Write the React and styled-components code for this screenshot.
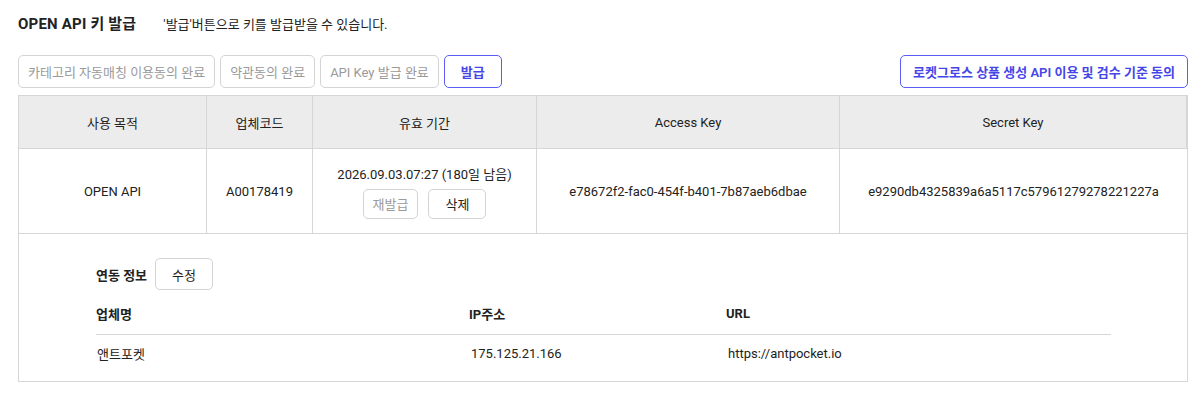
import * as React from 'react';
import styled, { createGlobalStyle } from 'styled-components';

const GlobalStyle = createGlobalStyle`
  body {
    margin: 0;
    background: #fff;
    font-family: "Roboto", "Noto Sans CJK KR", sans-serif;
    color: #222;
  }
`;

const Page = styled.div`
  padding: 12px 14px 0 18px;
`;

const TitleRow = styled.div`
  display: flex;
  align-items: baseline;
  gap: 27px;
  height: 22px;
`;

const Title = styled.h1`
  margin: 0;
  font-size: 15px;
  font-weight: 700;
  letter-spacing: 0.2px;
`;

const Desc = styled.span`
  font-size: 13px;
  color: #222;
`;

const Toolbar = styled.div`
  display: flex;
  align-items: center;
  gap: 5px;
  margin-top: 21px;
  height: 33px;
`;

const Button = styled.button`
  height: ${({ small }) => (small ? '30px' : '33px')};
  padding: 0 ${({ pad }) => pad || 9}px;
  border-radius: 5px;
  border: 1px solid ${({ primary }) => (primary ? '#5b5bf5' : '#d4d4d4')};
  background: #fff;
  color: ${({ primary, muted }) => (primary ? '#4646e8' : muted ? '#9a9a9a' : '#222')};
  font-family: inherit;
  font-size: 13px;
  font-weight: ${({ primary }) => (primary ? 600 : 400)};
  cursor: pointer;
  white-space: nowrap;
`;

const EditButton = styled(Button)`
  height: 32px;
`;

const Spacer = styled.div`
  flex: 1;
`;

const Box = styled.div`
  margin-top: 7px;
  width: 1168px;
  border: 1px solid #d6d6d6;
`;

const Grid = styled.div`
  display: grid;
  grid-template-columns: 188px 106px 224px 303px 1fr;
`;

const HeadCell = styled.div`
  height: 52px;
  display: flex;
  align-items: center;
  justify-content: center;
  background: #ececec;
  border-bottom: 1px solid #d6d6d6;
  border-right: 1px solid #d6d6d6;
  font-size: 13px;
  &:last-child { border-right: none; }
`;

const Cell = styled.div`
  height: 84px;
  display: flex;
  flex-direction: column;
  align-items: center;
  justify-content: center;
  gap: 6px;
  border-bottom: 1px solid #d6d6d6;
  border-right: ${({ last }) => (last ? 'none' : '1px solid #d6d6d6')};
  font-size: 13px;
`;

const ButtonPair = styled.div`
  display: flex;
  gap: 10px;
`;

const Detail = styled.div`
  padding: 24px 76px 10px 77px;
`;

const InfoRow = styled.div`
  display: flex;
  align-items: center;
  gap: 8px;
`;

const InfoLabel = styled.span`
  font-size: 13px;
  font-weight: 700;
`;

const SubTable = styled.div`
  margin-top: 2px;
  display: grid;
  grid-template-columns: 373px 257px 1fr;
`;

const SubHead = styled.div`
  height: 42px;
  display: flex;
  align-items: center;
  font-size: 13px;
  font-weight: 700;
  border-bottom: 1px solid #d6d6d6;
`;

const SubCell = styled.div`
  height: 36px;
  display: flex;
  align-items: center;
  font-size: 13px;
  padding-left: ${({ indent }) => indent || 0}px;
`;

const headers = ['사용 목적', '업체코드', '유효 기간', 'Access Key', 'Secret Key'];

export default function App() {
  return (
    <Page>
      <GlobalStyle />
      <TitleRow>
        <Title>OPEN API 키 발급</Title>
        <Desc>'발급'버튼으로 키를 발급받을 수 있습니다.</Desc>
      </TitleRow>
      <Toolbar>
        <Button muted>카테고리 자동매칭 이용동의 완료</Button>
        <Button muted>약관동의 완료</Button>
        <Button muted>API Key 발급 완료</Button>
        <Button primary pad={16}>발급</Button>
        <Spacer />
        <Button primary pad={12}>로켓그로스 상품 생성 API 이용 및 검수 기준 동의</Button>
      </Toolbar>
      <Box>
        <Grid>
          {headers.map((h) => (
            <HeadCell key={h}>{h}</HeadCell>
          ))}
          <Cell>OPEN API</Cell>
          <Cell>A00178419</Cell>
          <Cell>
            <span>2026.09.03.07:27 (180일 남음)</span>
            <ButtonPair>
              <Button small muted>재발급</Button>
              <Button small pad={16}>삭제</Button>
            </ButtonPair>
          </Cell>
          <Cell>e78672f2-fac0-454f-b401-7b87aeb6dbae</Cell>
          <Cell last>e9290db4325839a6a5117c57961279278221227a</Cell>
        </Grid>
        <Detail>
          <InfoRow>
            <InfoLabel>연동 정보</InfoLabel>
            <EditButton pad={16}>수정</EditButton>
          </InfoRow>
          <SubTable>
            <SubHead>업체명</SubHead>
            <SubHead>IP주소</SubHead>
            <SubHead>URL</SubHead>
            <SubCell indent={1}>앤트포켓</SubCell>
            <SubCell indent={2}>175.125.21.166</SubCell>
            <SubCell indent={2}>https://antpocket.io</SubCell>
          </SubTable>
        </Detail>
      </Box>
    </Page>
  );
}
